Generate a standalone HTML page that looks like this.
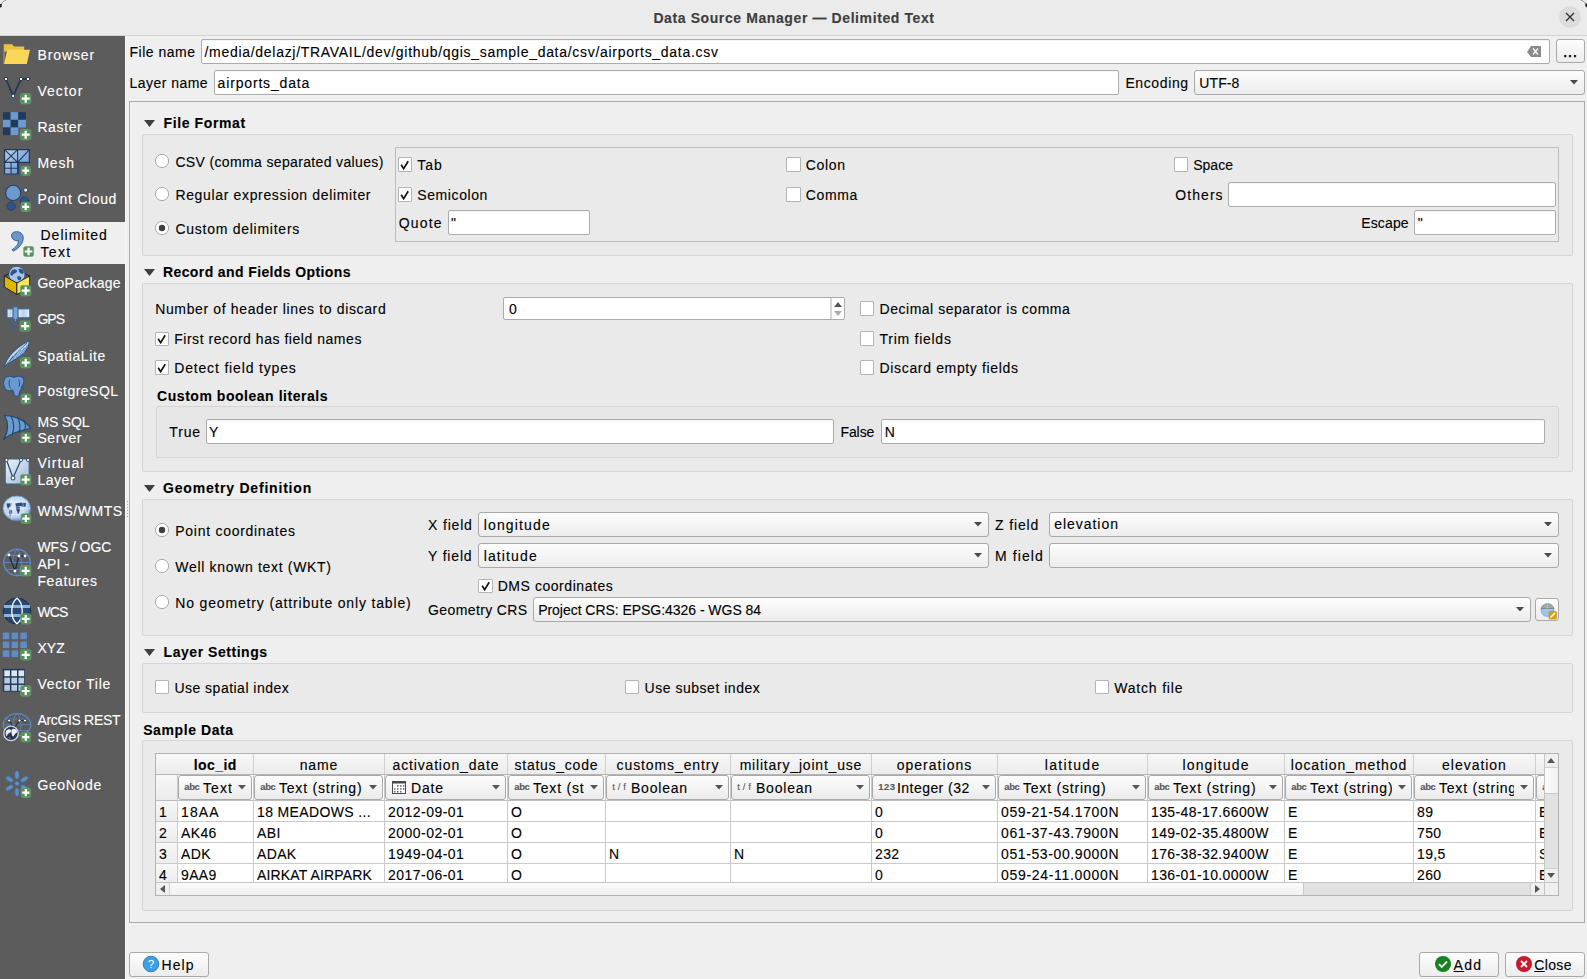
<!DOCTYPE html><html><head><meta charset="utf-8"><style>
html,body{margin:0;padding:0;width:1587px;height:979px;overflow:hidden;background:#efefef;font-family:"Liberation Sans",sans-serif;}
.t{position:absolute;white-space:nowrap;line-height:20px;-webkit-text-stroke:0.12px currentColor;}
</style></head><body>
<div style="position:absolute;left:0px;top:0px;width:1588px;height:36px;box-sizing:border-box;background:#ebebeb"></div>
<div style="position:absolute;left:0px;top:35px;width:1588px;height:1px;box-sizing:border-box;background:#d3d3d3"></div>
<div class="t" style="left:653.4px;top:8.1px;font-size:14px;letter-spacing:0.6001785714285721px;color:#3d3d3d;font-weight:bold;">Data Source Manager — Delimited Text</div>
<svg width="24" height="24" style="position:absolute;left:1559px;top:5px"><circle cx="11" cy="12" r="10.8" fill="#dcdcdc"/><path d="M7 8L15 16M15 8L7 16" stroke="#333" stroke-width="1.4"/></svg>
<svg width="8" height="9" style="position:absolute;left:0;top:0"><path d="M0.3 8Q0.8 1.5 6.5 0" stroke="#9a9a9a" stroke-width="1" fill="none"/><path d="M1.8 8Q2.5 3 7.5 1" stroke="#fafafa" stroke-width="0.8" fill="none"/><rect x="0" y="4" width="1.6" height="3.2" fill="#1e1e1e"/></svg>
<svg width="8" height="9" style="position:absolute;left:1579px;top:0"><path d="M7.7 8Q7.2 1.5 1.5 0" stroke="#9a9a9a" stroke-width="1" fill="none"/><path d="M6.2 8Q5.5 3 0.5 1" stroke="#fafafa" stroke-width="0.8" fill="none"/><rect x="6.4" y="3.5" width="1.6" height="3.2" fill="#1e1e1e"/></svg>
<div style="position:absolute;left:0px;top:36px;width:125px;height:944px;box-sizing:border-box;background:#5c5c5c"></div>
<div style="position:absolute;left:0px;top:222px;width:125px;height:42px;box-sizing:border-box;background:#efefef"></div>
<div style="position:absolute;left:125px;top:36px;width:1px;height:944px;box-sizing:border-box;background:#f7f7f7"></div>
<div style="position:absolute;left:127px;top:501px;width:1px;height:1px;box-sizing:border-box;background:#a8a8a8"></div>
<div style="position:absolute;left:127px;top:504px;width:1px;height:1px;box-sizing:border-box;background:#a8a8a8"></div>
<div style="position:absolute;left:127px;top:507px;width:1px;height:1px;box-sizing:border-box;background:#a8a8a8"></div>
<div style="position:absolute;left:127px;top:510px;width:1px;height:1px;box-sizing:border-box;background:#a8a8a8"></div>
<div style="position:absolute;left:127px;top:513px;width:1px;height:1px;box-sizing:border-box;background:#a8a8a8"></div>
<div style="position:absolute;left:127px;top:516px;width:1px;height:1px;box-sizing:border-box;background:#a8a8a8"></div>
<div class="t" style="left:37.4px;top:45.3px;font-size:14px;letter-spacing:0.9067708333333329px;color:#fff;">Browser</div>
<div class="t" style="left:37.4px;top:81.2px;font-size:14px;letter-spacing:1.059375px;color:#fff;">Vector</div>
<div class="t" style="left:37.4px;top:117.2px;font-size:14px;letter-spacing:0.6131249999999995px;color:#fff;">Raster</div>
<div class="t" style="left:37.4px;top:152.8px;font-size:14px;letter-spacing:0.7885416666666671px;color:#fff;">Mesh</div>
<div class="t" style="left:37.4px;top:188.6px;font-size:14px;letter-spacing:0.6609375px;color:#fff;">Point Cloud</div>
<div class="t" style="left:37.4px;top:273.0px;font-size:14px;letter-spacing:0.24965277777777808px;color:#fff;">GeoPackage</div>
<div class="t" style="left:37.4px;top:308.9px;font-size:14px;letter-spacing:-0.9890624999999993px;color:#fff;">GPS</div>
<div class="t" style="left:37.4px;top:345.5px;font-size:14px;letter-spacing:0.6243055555555562px;color:#fff;">SpatiaLite</div>
<div class="t" style="left:37.4px;top:381.0px;font-size:14px;letter-spacing:0.49270833333333364px;color:#fff;">PostgreSQL</div>
<div class="t" style="left:37.4px;top:411.8px;font-size:14px;letter-spacing:-0.16124999999999973px;color:#fff;">MS SQL</div>
<div class="t" style="left:37.4px;top:427.8px;font-size:14px;letter-spacing:0.5731250000000003px;color:#fff;">Server</div>
<div class="t" style="left:37.4px;top:453.3px;font-size:14px;letter-spacing:1.09375px;color:#fff;">Virtual</div>
<div class="t" style="left:37.4px;top:469.5px;font-size:14px;letter-spacing:0.5421875000000007px;color:#fff;">Layer</div>
<div class="t" style="left:37.4px;top:500.9px;font-size:14px;letter-spacing:0.5607142857142853px;color:#fff;">WMS/WMTS</div>
<div class="t" style="left:37.4px;top:537.4px;font-size:14px;letter-spacing:-0.09648437499999929px;color:#fff;">WFS / OGC</div>
<div class="t" style="left:37.4px;top:554.2px;font-size:14px;letter-spacing:0.19374999999999964px;color:#fff;">API -</div>
<div class="t" style="left:37.4px;top:571.1px;font-size:14px;letter-spacing:0.6214285714285717px;color:#fff;">Features</div>
<div class="t" style="left:37.4px;top:601.6px;font-size:14px;letter-spacing:-0.8359375px;color:#fff;">WCS</div>
<div class="t" style="left:37.4px;top:637.9px;font-size:14px;letter-spacing:0.1328125px;color:#fff;">XYZ</div>
<div class="t" style="left:37.4px;top:673.5px;font-size:14px;letter-spacing:0.7525000000000006px;color:#fff;">Vector Tile</div>
<div class="t" style="left:37.4px;top:710.0px;font-size:14px;letter-spacing:-0.32593750000000055px;color:#fff;">ArcGIS REST</div>
<div class="t" style="left:37.4px;top:726.6px;font-size:14px;letter-spacing:0.5731250000000003px;color:#fff;">Server</div>
<div class="t" style="left:37.4px;top:774.5px;font-size:14px;letter-spacing:0.6437499999999995px;color:#fff;">GeoNode</div>
<div class="t" style="left:40.5px;top:225.2px;font-size:14px;letter-spacing:1.0050781250000007px;color:#000;">Delimited</div>
<div class="t" style="left:40.5px;top:241.8px;font-size:14px;letter-spacing:1.3041666666666671px;color:#000;">Text</div>
<svg width="125" height="979" style="position:absolute;left:0;top:0">
<path d="M4 44.2h8.2l1.8 2.2h10.2v5H4z" fill="#e9c443"/>
<path d="M7.3 49.8H30L26.8 64H4z" fill="#fcd659"/>
<path d="M4 44.2V64" stroke="#d9b13a" stroke-width="0.8"/>
<path d="M6 79L13.2 96L21 79H28" stroke="#213a5c" stroke-width="1.9" fill="none"/>
<circle cx="6" cy="79" r="1.7" fill="#fff" stroke="#213a5c" stroke-width="1"/>
<circle cx="21" cy="79" r="1.7" fill="#fff" stroke="#213a5c" stroke-width="1"/>
<circle cx="28" cy="79" r="1.7" fill="#fff" stroke="#213a5c" stroke-width="1"/>
<circle cx="13.2" cy="96" r="1.7" fill="#fff" stroke="#213a5c" stroke-width="1"/>
<rect x="20.5" y="93.5" width="10.4" height="10.4" rx="1.8" fill="#55915a" stroke="#6fa46f" stroke-width="0.6"/><path d="M25.7 94.7V102.7M21.7 98.7H29.7" stroke="#fff" stroke-width="2.2"/>
<rect x="3.0" y="112.2" width="7.7" height="7.7" fill="#213a5c"/>
<rect x="10.6" y="112.2" width="7.7" height="7.7" fill="#6a9bd3"/>
<rect x="18.2" y="112.2" width="7.7" height="7.7" fill="#213a5c"/>
<rect x="3.0" y="119.8" width="7.7" height="7.7" fill="#6a9bd3"/>
<rect x="10.6" y="119.8" width="7.7" height="7.7" fill="#213a5c"/>
<rect x="18.2" y="119.8" width="7.7" height="7.7" fill="#6a9bd3"/>
<rect x="3.0" y="127.4" width="7.7" height="7.7" fill="#213a5c"/>
<rect x="10.6" y="127.4" width="7.7" height="7.7" fill="#6a9bd3"/>
<rect x="20.5" y="129.5" width="10.4" height="10.4" rx="1.8" fill="#55915a" stroke="#6fa46f" stroke-width="0.6"/><path d="M25.7 130.7V138.7M21.7 134.7H29.7" stroke="#fff" stroke-width="2.2"/>
<defs><linearGradient id="mg" x1="0" y1="0" x2="1" y2="1"><stop offset="0" stop-color="#b5cfee"/><stop offset="1" stop-color="#5e8ec9"/></linearGradient></defs>
<path d="M4.6 149.6H29.4V162.4H18.2V174H4.6z" fill="url(#mg)" stroke="#213a5c" stroke-width="1.2" stroke-linejoin="miter"/>
<path d="M4.6 162.4H18.2M17.6 149.6V174M4.6 149.6L17.6 162.4M17.6 149.6L4.6 162.4M17.6 162.4L29.4 149.6M4.6 168.2H17.6M11.1 162.4V174" stroke="#213a5c" stroke-width="1.1"/>
<rect x="21.0" y="166.0" width="9.4" height="9.4" rx="1.8" fill="#55915a" stroke="#6fa46f" stroke-width="0.6"/><path d="M25.7 167.2V174.2M22.2 170.7H29.2" stroke="#fff" stroke-width="2.2"/>
<circle cx="13.2" cy="192.9" r="7.6" fill="#6a98cf" stroke="#22416a" stroke-width="1.1"/>
<circle cx="25.7" cy="190.1" r="2.1" fill="#dfe9f5" stroke="#22416a" stroke-width="0.9"/>
<circle cx="24.6" cy="201.4" r="4.4" fill="#2e5384" stroke="#22416a" stroke-width="0.8"/>
<circle cx="11.1" cy="206.1" r="4.2" fill="#2e5384" stroke="#22416a" stroke-width="0.8"/>
<rect x="21.0" y="202.10000000000002" width="9.4" height="9.4" rx="1.8" fill="#55915a" stroke="#6fa46f" stroke-width="0.6"/><path d="M25.7 203.3V210.3M22.2 206.8H29.2" stroke="#fff" stroke-width="2.2"/>
<path d="M12.2 233.3C14.5 230.6 22.5 230.8 23.2 237.2C23.8 243 18.6 248.5 13.2 251.2L12.2 249.6C15.8 247.3 18.6 244.4 18.4 240.6C14.4 241.8 9.8 237.6 12.2 233.3z" fill="#6a97c9" stroke="#2f5987" stroke-width="0.9"/>
<rect x="23.6" y="246.5" width="10.0" height="10.0" rx="1.8" fill="#55915a" stroke="#6fa46f" stroke-width="0.6"/><path d="M28.6 247.7V255.3M24.8 251.5H32.4" stroke="#fff" stroke-width="2.2"/>
<circle cx="16.8" cy="274.5" r="8.2" fill="#a4c6ea" stroke="#33577f" stroke-width="0.9"/>
<path d="M10.5 272.5c1.5-3 4.5-4 6-2.5s-0.5 3 -2 3.5-1.5 2.5-3 2.2c-1-0.2-1.3-1.8-1-3.2zM18.5 269c2-0.5 4.5 0.5 5.2 2.5s-1 2.5-2.5 2.2-2.7-2.7-2.7-4.7zM17.5 276.5c1.5-0.5 3.5 0 3.8 1.5s-1.5 2.5-2.8 2-1.5-3-1-3.5z" fill="#2d5386"/>
<path d="M4.3 276L16.9 283V294.5L4.3 287z" fill="#dcb800" stroke="#1a1a1a" stroke-width="0.9" stroke-linejoin="round"/>
<path d="M16.9 283L29.6 276V287.5L16.9 294.5z" fill="#f3e65a" stroke="#1a1a1a" stroke-width="0.9" stroke-linejoin="round"/>
<path d="M4.3 276L9 273.8M29.6 276L25 273.8" stroke="#1a1a1a" stroke-width="0.9"/>
<rect x="20.5" y="285.5" width="10.4" height="10.4" rx="1.8" fill="#55915a" stroke="#6fa46f" stroke-width="0.6"/><path d="M25.7 286.7V294.7M21.7 290.7H29.7" stroke="#fff" stroke-width="2.2"/>
<defs><linearGradient id="gp" x1="0" y1="0" x2="1" y2="0"><stop offset="0" stop-color="#e8f0f8"/><stop offset="0.5" stop-color="#b9d0ea"/><stop offset="1" stop-color="#e8f0f8"/></linearGradient></defs>
<rect x="7" y="308.8" width="6.5" height="9" fill="url(#gp)" stroke="#3b6290" stroke-width="1.1"/>
<rect x="17.5" y="308.8" width="12.3" height="9" fill="url(#gp)" stroke="#3b6290" stroke-width="1.1"/>
<path d="M13 306.8h5v12.5h-1.5v2.5h-2v-2.5H13z" fill="#7aa3d3" stroke="#3b6290" stroke-width="1.1"/>
<path d="M6.5 321.5c0.8 4.5 4 8 10 9M9.5 320.5c0.6 3 2.6 5.2 7 6" stroke="#3b6290" stroke-width="1.3" fill="none"/>
<rect x="20.0" y="320.90000000000003" width="10.4" height="10.4" rx="1.8" fill="#55915a" stroke="#6fa46f" stroke-width="0.6"/><path d="M25.2 322.1V330.1M21.2 326.1H29.2" stroke="#fff" stroke-width="2.2"/>
<path d="M3.6 367.6C6 360 12 349 29.6 340.4C29 347 25 354 16.5 358.5C12 361 7.5 363.5 3.6 367.6z" fill="#c6d9ef" stroke="#34587f" stroke-width="1.1"/>
<path d="M9.5 361.5L13 356M12.5 359.8L17 353M16 358L21 350M19.5 356L24.5 347.5M23 353.5L27.5 345" stroke="#6f9acb" stroke-width="1.4"/>
<path d="M3.6 367.6C10 360 18 351 27 343" stroke="#34587f" stroke-width="0.8" fill="none"/>
<rect x="20.5" y="357.5" width="10.4" height="10.4" rx="1.8" fill="#55915a" stroke="#6fa46f" stroke-width="0.6"/><path d="M25.7 358.7V366.7M21.7 362.7H29.7" stroke="#fff" stroke-width="2.2"/>
<path d="M5 378C7 375.5 12 376 14 377.5C16 376 21 375.5 23.2 378C24.5 381 23.5 385 21 387.8L23.8 388.3L20.8 389.6C19.8 390.5 19.6 392 19.2 394C18.6 396.6 15 397 14.2 395C13.3 393 13.6 391 12.6 390C10 391 7 391 5.5 389C3 386 3 381 5 378z" fill="#6a9acf" stroke="#2a5283" stroke-width="1.1" stroke-linejoin="round"/>
<path d="M9.8 379.5C8.5 382 9 386 10.5 388.5M18.5 379.5C20 381.5 20 384.5 18.8 386.8" stroke="#2a5283" stroke-width="1" fill="none"/>
<rect x="21.0" y="394.1" width="9.700000000000001" height="9.700000000000001" rx="1.8" fill="#55915a" stroke="#6fa46f" stroke-width="0.6"/><path d="M25.85 395.3V402.6M22.2 398.95H29.5" stroke="#fff" stroke-width="2.2"/>
<path d="M4.2 415.5C13 415.5 25 419 30.5 428.5C21 430 11 433 3.3 439.5C8.5 432 9 422 4.2 415.5z" fill="#6a9acf" stroke="#22476f" stroke-width="1.2" stroke-linejoin="round"/>
<path d="M11 416C14 422 14.5 429 12 435.5M17.5 417C20 422 20.5 427.5 19 433M23.5 419.5C25.5 423 25.8 426.5 25 430" stroke="#22476f" stroke-width="1.1" fill="none"/>
<rect x="21.0" y="432.90000000000003" width="9.700000000000001" height="9.700000000000001" rx="1.8" fill="#55915a" stroke="#6fa46f" stroke-width="0.6"/><path d="M25.85 434.1V441.40000000000003M22.2 437.75H29.5" stroke="#fff" stroke-width="2.2"/>
<defs><linearGradient id="vg" x1="0" y1="0" x2="1" y2="1"><stop offset="0" stop-color="#eef3f9"/><stop offset="1" stop-color="#9db8d9"/></linearGradient></defs>
<rect x="5.2" y="459" width="24" height="25" rx="2" fill="url(#vg)" stroke="#3c608c" stroke-width="1.1"/>
<path d="M6.5 460L13 478L21 460" stroke="#22476f" stroke-width="1.2" fill="none"/>
<circle cx="13" cy="478" r="2" fill="#fff" stroke="#22476f" stroke-width="1"/>
<circle cx="21" cy="460" r="1.6" fill="#fff" stroke="#22476f" stroke-width="0.9"/><circle cx="28" cy="460" r="1.6" fill="#fff" stroke="#22476f" stroke-width="0.9"/><circle cx="6.5" cy="460" r="1.6" fill="#fff" stroke="#22476f" stroke-width="0.9"/>
<rect x="20.5" y="474.5" width="10.4" height="10.4" rx="1.8" fill="#55915a" stroke="#6fa46f" stroke-width="0.6"/><path d="M25.7 475.7V483.7M21.7 479.7H29.7" stroke="#fff" stroke-width="2.2"/>
<defs><radialGradient id="wg" cx="0.45" cy="0.4" r="0.6"><stop offset="0" stop-color="#e6eff9"/><stop offset="0.75" stop-color="#bcd3ee"/><stop offset="1" stop-color="#6d98cd"/></radialGradient></defs>
<ellipse cx="16.8" cy="508.3" rx="13.8" ry="12.3" fill="url(#wg)" stroke="#6a96cc" stroke-width="0.8"/>
<path d="M6.5 503.5L11.5 503.2L11 506L9 507.5L8 510L7 506z M9.5 509.5L12 510.5L11.5 514L10 516.5L9.3 513z M15.2 503.5L21 502.5L26 503L25.5 506.5L23.5 507L21 506L19 506.5L16 506.5z M15.5 506.8L20 507L19.8 510.5L18.2 514.5L16.5 510z" fill="#2b4d7c"/>
<path d="M3.5 508.3H30M5.5 502H28M5.5 514.5H28M12.5 496.5C9.5 502 9.5 514 12.5 520.2M21 496.5C24 502 24 514 21 520.2" stroke="#f2f6fb" stroke-width="0.6" fill="none" opacity="0.8"/>
<rect x="21.0" y="513.6999999999999" width="9.8" height="9.8" rx="1.8" fill="#55915a" stroke="#6fa46f" stroke-width="0.6"/><path d="M25.9 514.9V522.3M22.2 518.6H29.6" stroke="#fff" stroke-width="2.2"/>
<circle cx="17" cy="562.5" r="13.2" fill="#4f4f4f" fill-opacity="0.0" stroke="#5a8ac5" stroke-width="1.4"/>
<path d="M4 562.5H30M17 549.5C11 556 11 569 17 575.5M17 549.5C23 556 23 569 17 575.5M6 555.5H28M6 569.5H28" stroke="#5a8ac5" stroke-width="0.9" fill="none"/>
<path d="M9 555L15 571L19 556L25 556" stroke="#1d2c40" stroke-width="1.3" fill="none"/>
<circle cx="9" cy="555" r="1.4" fill="#fff"/><circle cx="19" cy="556" r="1.4" fill="#fff"/><circle cx="25" cy="556" r="1.4" fill="#fff"/><circle cx="15" cy="571" r="1.4" fill="#fff"/>
<rect x="20.5" y="565.5999999999999" width="10.4" height="10.4" rx="1.8" fill="#55915a" stroke="#6fa46f" stroke-width="0.6"/><path d="M25.7 566.8V574.8M21.7 570.8H29.7" stroke="#fff" stroke-width="2.2"/>
<ellipse cx="17" cy="611" rx="13.7" ry="13" fill="#2b4a73" stroke="#1a2c44" stroke-width="1"/>
<path d="M4 606.5H30M4 615.5H30" stroke="#8fb2dc" stroke-width="3.2"/>
<path d="M17 598C10 604 10 618 17 624M17 598C24 604 24 618 17 624" stroke="#fff" stroke-width="1.3" fill="none"/>
<rect x="20.5" y="613.6999999999999" width="10.4" height="10.4" rx="1.8" fill="#55915a" stroke="#6fa46f" stroke-width="0.6"/><path d="M25.7 614.9V622.9M21.7 618.9H29.7" stroke="#fff" stroke-width="2.2"/>
<rect x="2.8" y="632.6" width="6.5" height="6.6" fill="#5d8cc7"/>
<rect x="11.6" y="632.6" width="6.5" height="6.6" fill="#5d8cc7"/>
<rect x="20.4" y="632.6" width="6.5" height="6.6" fill="#5d8cc7"/>
<rect x="2.8" y="641.5" width="6.5" height="6.6" fill="#5d8cc7"/>
<rect x="11.6" y="641.5" width="6.5" height="6.6" fill="#5d8cc7"/>
<rect x="20.4" y="641.5" width="6.5" height="6.6" fill="#5d8cc7"/>
<rect x="2.8" y="650.4" width="6.5" height="6.6" fill="#5d8cc7"/>
<rect x="11.6" y="650.4" width="6.5" height="6.6" fill="#5d8cc7"/>
<rect x="20.5" y="649.6999999999999" width="10.4" height="10.4" rx="1.8" fill="#55915a" stroke="#6fa46f" stroke-width="0.6"/><path d="M25.7 650.9V658.9M21.7 654.9H29.7" stroke="#fff" stroke-width="2.2"/>
<rect x="2.8" y="668.9" width="22" height="22.8" fill="#213a5c"/>
<rect x="4.3" y="670.4" width="5.6" height="5.8" fill="#dde6f1"/>
<rect x="11.4" y="670.4" width="5.6" height="5.8" fill="#dde6f1"/>
<rect x="18.5" y="670.4" width="5.6" height="5.8" fill="#dde6f1"/>
<rect x="4.3" y="677.7" width="5.6" height="5.8" fill="#b7cbe3"/>
<rect x="11.4" y="677.7" width="5.6" height="5.8" fill="#b7cbe3"/>
<rect x="18.5" y="677.7" width="5.6" height="5.8" fill="#b7cbe3"/>
<rect x="4.3" y="685.0" width="5.6" height="5.8" fill="#b7cbe3"/>
<rect x="11.4" y="685.0" width="5.6" height="5.8" fill="#b7cbe3"/>
<rect x="18.5" y="685.0" width="5.6" height="5.8" fill="#b7cbe3"/>
<rect x="20.5" y="685.8" width="10.4" height="10.4" rx="1.8" fill="#55915a" stroke="#6fa46f" stroke-width="0.6"/><path d="M25.7 687.0V695.0M21.7 691.0H29.7" stroke="#fff" stroke-width="2.2"/>
<ellipse cx="17" cy="724.7" rx="13.8" ry="11" fill="none" stroke="#5a8ac5" stroke-width="1.3"/>
<path d="M3.5 724.7H30.5M6 719H28M6 730.5H28M17 713.7C11.5 719 11.5 730 17 735.7M17 713.7C22.5 719 22.5 730 17 735.7" stroke="#5a8ac5" stroke-width="0.8" fill="none"/>
<path d="M9.2 720.5L14 728L19.5 720.5H25" stroke="#1d2c40" stroke-width="1.2" fill="none"/>
<circle cx="9.2" cy="720.5" r="1.5" fill="#fff" stroke="#1d2c40" stroke-width="0.8"/><circle cx="19.5" cy="720.5" r="1.5" fill="#fff" stroke="#1d2c40" stroke-width="0.8"/><circle cx="25" cy="720.5" r="1.5" fill="#fff" stroke="#1d2c40" stroke-width="0.8"/>
<circle cx="11" cy="733.4" r="7.2" fill="#23395a" stroke="#d8d8d8" stroke-width="1.3"/>
<path d="M6 731c1.5-2 4-2.5 5-1s-1 3-2.5 3.5-1 3-2 2.5c-1-0.8-1-3.5-0.5-5zM12.5 729c2-0.5 4 0.5 4.5 2s-1 2-2 3-1 3-2 2.5-1.5-3-1.5-4.5 0-2.5 1-3zM8.5 737.5c1 0 2 0.5 1.8 1.5" fill="#f0f0f0"/>
<rect x="21.0" y="732.3" width="9.6" height="9.6" rx="1.8" fill="#55915a" stroke="#6fa46f" stroke-width="0.6"/><path d="M25.799999999999997 733.5V740.7M22.2 737.1H29.4" stroke="#fff" stroke-width="2.2"/>
<g transform="translate(17 783.5)" fill="#5f8fca" stroke="#3f6a9e" stroke-width="0.6">
<ellipse cx="0" cy="-8.6" rx="2.1" ry="4.2" transform="rotate(0)"/>
<ellipse cx="0" cy="-8.6" rx="2.1" ry="4.2" transform="rotate(60)"/>
<ellipse cx="0" cy="-8.6" rx="2.1" ry="4.2" transform="rotate(120)"/>
<ellipse cx="0" cy="-8.6" rx="2.1" ry="4.2" transform="rotate(180)"/>
<ellipse cx="0" cy="-8.6" rx="2.1" ry="4.2" transform="rotate(240)"/>
<ellipse cx="0" cy="-8.6" rx="2.1" ry="4.2" transform="rotate(300)"/>
<circle cx="0" cy="0" r="2.2"/></g>
<rect x="21.0" y="787.9" width="9.6" height="9.6" rx="1.8" fill="#55915a" stroke="#6fa46f" stroke-width="0.6"/><path d="M25.799999999999997 789.1V796.3000000000001M22.2 792.7H29.4" stroke="#fff" stroke-width="2.2"/>
</svg>
<div class="t" style="left:129.5px;top:42.0px;font-size:14px;letter-spacing:0.50390625px;color:#000;">File name</div>
<div style="position:absolute;left:201px;top:39px;width:1349px;height:25px;box-sizing:border-box;background:#fff;border:1px solid #ababab;border-radius:2px;box-shadow:inset 0 1px 0 rgba(0,0,0,0.04)"></div>
<div class="t" style="left:204.5px;top:41.7px;font-size:14px;letter-spacing:0.7048214285714283px;color:#000;">/media/delazj/TRAVAIL/dev/github/qgis_sample_data/csv/airports_data.csv</div>
<svg width="14" height="12" style="position:absolute;left:1527px;top:46px"><path d="M0 6L4 0H14V11H4z" fill="#8a8a8a"/><path d="M6 2.5L11 8.5M11 2.5L6 8.5" stroke="#fff" stroke-width="1.2"/></svg>
<div style="position:absolute;left:1556px;top:39px;width:29px;height:24px;box-sizing:border-box;background:linear-gradient(#fdfdfd,#ececec);border:1px solid #a9a9a9;border-radius:3px"></div>
<div class="t" style="left:1563.2px;top:42.2px;font-size:14px;letter-spacing:1.0px;color:#000;-webkit-text-stroke:0.6px #000;">...</div>
<div class="t" style="left:129.5px;top:73.0px;font-size:14px;letter-spacing:0.46249999999999936px;color:#000;">Layer name</div>
<div style="position:absolute;left:214px;top:70px;width:905px;height:25px;box-sizing:border-box;background:#fff;border:1px solid #ababab;border-radius:2px;box-shadow:inset 0 1px 0 rgba(0,0,0,0.04)"></div>
<div class="t" style="left:217.6px;top:72.5px;font-size:14px;letter-spacing:0.8317708333333336px;color:#000;">airports_data</div>
<div class="t" style="left:1125.4px;top:73.0px;font-size:14px;letter-spacing:0.6156250000000004px;color:#000;">Encoding</div>
<div style="position:absolute;left:1194px;top:70px;width:391px;height:25px;box-sizing:border-box;background:linear-gradient(#fdfdfd,#ececec);border:1px solid #a9a9a9;border-radius:3px"></div>
<div class="t" style="left:1199.3px;top:72.7px;font-size:14px;letter-spacing:0.10703125000000036px;color:#000;">UTF-8</div>
<svg width="8" height="4.6" style="position:absolute;left:1569.5px;top:80.0px"><path d="M0 0H8L4.0 4.6z" fill="#4a4a4a"/></svg>
<div style="position:absolute;left:129px;top:101px;width:1456px;height:822px;box-sizing:border-box;border:1px solid #ababab;background:#efefef"></div>
<svg width="12" height="8" style="position:absolute;left:143.6px;top:120.0px"><path d="M0 0H11L5.5 7z" fill="#404040"/></svg>
<div class="t" style="left:163.5px;top:113.1px;font-size:14px;letter-spacing:0.6231250000000003px;color:#000;font-weight:bold;">File Format</div>
<div style="position:absolute;left:142px;top:134px;width:1431px;height:122px;box-sizing:border-box;border:1px solid #d5d5d5;border-radius:2px;background:rgba(0,0,0,0.018)"></div>
<svg width="16" height="16" style="position:absolute;left:154.1px;top:152.9px"><circle cx="8" cy="8" r="6.6" fill="#fff" stroke="#a9a9a9" stroke-width="1"/></svg>
<div class="t" style="left:175.4px;top:151.8px;font-size:14px;letter-spacing:0.35474537037037035px;color:#000;">CSV (comma separated values)</div>
<svg width="16" height="16" style="position:absolute;left:154.1px;top:185.9px"><circle cx="8" cy="8" r="6.6" fill="#fff" stroke="#a9a9a9" stroke-width="1"/></svg>
<div class="t" style="left:175.4px;top:184.8px;font-size:14px;letter-spacing:0.6547453703703702px;color:#000;">Regular expression delimiter</div>
<svg width="16" height="16" style="position:absolute;left:154.1px;top:219.9px"><circle cx="8" cy="8" r="6.6" fill="#fff" stroke="#a9a9a9" stroke-width="1"/><circle cx="8" cy="8" r="3.2" fill="#404040"/></svg>
<div class="t" style="left:175.4px;top:218.8px;font-size:14px;letter-spacing:0.7417968750000004px;color:#000;">Custom delimiters</div>
<div style="position:absolute;left:395px;top:147px;width:1164px;height:95px;box-sizing:border-box;border:1px solid #bdbdbd"></div>
<div style="position:absolute;left:398px;top:157px;width:14px;height:15px;box-sizing:border-box;background:#fff;border:1px solid #b4b4b4;border-radius:1px"></div>
<svg width="14" height="14" style="position:absolute;left:398.3px;top:157.8px"><path d="M3.2 6.8 L5.6 10.6 L10.2 3.2" stroke="#111" stroke-width="1.7" fill="none" stroke-linejoin="miter"/></svg>
<div class="t" style="left:417.3px;top:155.0px;font-size:14px;letter-spacing:0.9609375px;color:#000;">Tab</div>
<div style="position:absolute;left:398px;top:187px;width:14px;height:15px;box-sizing:border-box;background:#fff;border:1px solid #b4b4b4;border-radius:1px"></div>
<svg width="14" height="14" style="position:absolute;left:398.3px;top:187.6px"><path d="M3.2 6.8 L5.6 10.6 L10.2 3.2" stroke="#111" stroke-width="1.7" fill="none" stroke-linejoin="miter"/></svg>
<div class="t" style="left:417.3px;top:185.0px;font-size:14px;letter-spacing:0.5906249999999993px;color:#000;">Semicolon</div>
<div style="position:absolute;left:786px;top:157px;width:15px;height:15px;box-sizing:border-box;background:#fff;border:1px solid #b4b4b4;border-radius:1px"></div>
<div class="t" style="left:805.8px;top:155.0px;font-size:14px;letter-spacing:0.6765624999999993px;color:#000;">Colon</div>
<div style="position:absolute;left:786px;top:187px;width:15px;height:15px;box-sizing:border-box;background:#fff;border:1px solid #b4b4b4;border-radius:1px"></div>
<div class="t" style="left:805.8px;top:185.0px;font-size:14px;letter-spacing:0.62109375px;color:#000;">Comma</div>
<div style="position:absolute;left:1174px;top:157px;width:14px;height:15px;box-sizing:border-box;background:#fff;border:1px solid #b4b4b4;border-radius:1px"></div>
<div class="t" style="left:1193.2px;top:155.0px;font-size:14px;letter-spacing:0.02421874999999929px;color:#000;">Space</div>
<div class="t" style="left:398.7px;top:213.2px;font-size:14px;letter-spacing:1.1648437499999993px;color:#000;">Quote</div>
<div style="position:absolute;left:448px;top:210px;width:142px;height:25px;box-sizing:border-box;background:#fff;border:1px solid #ababab;border-radius:2px;box-shadow:inset 0 1px 0 rgba(0,0,0,0.04)"></div>
<div class="t" style="left:451.0px;top:212.6px;font-size:14px;letter-spacing:0.45px;color:#000;">"</div>
<div class="t" style="left:1175.3px;top:184.7px;font-size:14px;letter-spacing:1.0568749999999993px;color:#000;">Others</div>
<div style="position:absolute;left:1228px;top:182px;width:328px;height:25px;box-sizing:border-box;background:#fff;border:1px solid #ababab;border-radius:2px;box-shadow:inset 0 1px 0 rgba(0,0,0,0.04)"></div>
<div class="t" style="left:1361.3px;top:213.2px;font-size:14px;letter-spacing:0.11937499999999943px;color:#000;">Escape</div>
<div style="position:absolute;left:1414px;top:210px;width:142px;height:25px;box-sizing:border-box;background:#fff;border:1px solid #ababab;border-radius:2px;box-shadow:inset 0 1px 0 rgba(0,0,0,0.04)"></div>
<div class="t" style="left:1417.8px;top:212.7px;font-size:14px;letter-spacing:0.45px;color:#000;">"</div>
<svg width="12" height="8" style="position:absolute;left:143.6px;top:269.0px"><path d="M0 0H11L5.5 7z" fill="#404040"/></svg>
<div class="t" style="left:163.0px;top:261.6px;font-size:14px;letter-spacing:0.3899739583333333px;color:#000;font-weight:bold;">Record and Fields Options</div>
<div style="position:absolute;left:142px;top:283px;width:1431px;height:189px;box-sizing:border-box;border:1px solid #d5d5d5;border-radius:2px;background:rgba(0,0,0,0.018)"></div>
<div class="t" style="left:155.2px;top:298.6px;font-size:14px;letter-spacing:0.63720703125px;color:#000;">Number of header lines to discard</div>
<div style="position:absolute;left:503px;top:297px;width:342px;height:23px;box-sizing:border-box;background:#fff;border:1px solid #ababab;border-radius:2px"></div>
<div style="position:absolute;left:830px;top:298px;width:2px;height:21px;box-sizing:border-box;background:#d6d6d6"></div>
<svg width="10" height="16" style="position:absolute;left:832.5px;top:300.5px"><path d="M1 6H9L5 1z" fill="#555"/><path d="M1 10H9L5 15z" fill="#aaa"/></svg>
<div class="t" style="left:508.9px;top:298.6px;font-size:14px;letter-spacing:0.45px;color:#000;">0</div>
<div style="position:absolute;left:155px;top:332px;width:14px;height:14px;box-sizing:border-box;background:#fff;border:1px solid #b4b4b4;border-radius:1px"></div>
<svg width="14" height="14" style="position:absolute;left:155.2px;top:332.1px"><path d="M3.2 6.8 L5.6 10.6 L10.2 3.2" stroke="#111" stroke-width="1.7" fill="none" stroke-linejoin="miter"/></svg>
<div class="t" style="left:174.2px;top:328.7px;font-size:14px;letter-spacing:0.5357638888888885px;color:#000;">First record has field names</div>
<div style="position:absolute;left:155px;top:360px;width:14px;height:15px;box-sizing:border-box;background:#fff;border:1px solid #b4b4b4;border-radius:1px"></div>
<svg width="14" height="14" style="position:absolute;left:155.2px;top:360.6px"><path d="M3.2 6.8 L5.6 10.6 L10.2 3.2" stroke="#111" stroke-width="1.7" fill="none" stroke-linejoin="miter"/></svg>
<div class="t" style="left:174.2px;top:357.5px;font-size:14px;letter-spacing:0.8358455882352938px;color:#000;">Detect field types</div>
<div style="position:absolute;left:860px;top:301px;width:14px;height:15px;box-sizing:border-box;background:#fff;border:1px solid #b4b4b4;border-radius:1px"></div>
<div class="t" style="left:879.6px;top:298.6px;font-size:14px;letter-spacing:0.5123749999999996px;color:#000;">Decimal separator is comma</div>
<div style="position:absolute;left:860px;top:331px;width:14px;height:15px;box-sizing:border-box;background:#fff;border:1px solid #b4b4b4;border-radius:1px"></div>
<div class="t" style="left:879.6px;top:328.7px;font-size:14px;letter-spacing:0.7253124999999997px;color:#000;">Trim fields</div>
<div style="position:absolute;left:860px;top:360px;width:14px;height:15px;box-sizing:border-box;background:#fff;border:1px solid #b4b4b4;border-radius:1px"></div>
<div class="t" style="left:879.6px;top:357.5px;font-size:14px;letter-spacing:0.6501644736842108px;color:#000;">Discard empty fields</div>
<div class="t" style="left:157.1px;top:386.0px;font-size:14px;letter-spacing:0.5316761363636366px;color:#000;font-weight:bold;">Custom boolean literals</div>
<div style="position:absolute;left:156px;top:406px;width:1403px;height:52px;box-sizing:border-box;border:1px solid #d5d5d5;border-radius:2px;background:rgba(0,0,0,0.012)"></div>
<div class="t" style="left:169.3px;top:421.7px;font-size:14px;letter-spacing:0.8395833333333336px;color:#000;">True</div>
<div style="position:absolute;left:206px;top:419px;width:628px;height:25px;box-sizing:border-box;background:#fff;border:1px solid #ababab;border-radius:2px;box-shadow:inset 0 1px 0 rgba(0,0,0,0.04)"></div>
<div class="t" style="left:209.1px;top:421.6px;font-size:14px;letter-spacing:0.45px;color:#000;">Y</div>
<div class="t" style="left:840.4px;top:421.7px;font-size:14px;letter-spacing:-0.05859375px;color:#000;">False</div>
<div style="position:absolute;left:881px;top:419px;width:664px;height:25px;box-sizing:border-box;background:#fff;border:1px solid #ababab;border-radius:2px;box-shadow:inset 0 1px 0 rgba(0,0,0,0.04)"></div>
<div class="t" style="left:884.8px;top:421.7px;font-size:14px;letter-spacing:0.45px;color:#000;">N</div>
<svg width="12" height="8" style="position:absolute;left:143.6px;top:485.0px"><path d="M0 0H11L5.5 7z" fill="#404040"/></svg>
<div class="t" style="left:163.0px;top:478.2px;font-size:14px;letter-spacing:0.8001736111111105px;color:#000;font-weight:bold;">Geometry Definition</div>
<div style="position:absolute;left:142px;top:499px;width:1431px;height:137px;box-sizing:border-box;border:1px solid #d5d5d5;border-radius:2px;background:rgba(0,0,0,0.018)"></div>
<svg width="16" height="16" style="position:absolute;left:153.9px;top:522.2px"><circle cx="8" cy="8" r="6.6" fill="#fff" stroke="#a9a9a9" stroke-width="1"/><circle cx="8" cy="8" r="3.2" fill="#404040"/></svg>
<div class="t" style="left:175.3px;top:520.9px;font-size:14px;letter-spacing:0.7195312500000002px;color:#000;">Point coordinates</div>
<svg width="16" height="16" style="position:absolute;left:153.9px;top:558.2px"><circle cx="8" cy="8" r="6.6" fill="#fff" stroke="#a9a9a9" stroke-width="1"/></svg>
<div class="t" style="left:175.3px;top:556.9px;font-size:14px;letter-spacing:0.6795312499999995px;color:#000;">Well known text (WKT)</div>
<svg width="16" height="16" style="position:absolute;left:153.9px;top:594.2px"><circle cx="8" cy="8" r="6.6" fill="#fff" stroke="#a9a9a9" stroke-width="1"/></svg>
<div class="t" style="left:175.3px;top:592.9px;font-size:14px;letter-spacing:0.8374053030303032px;color:#000;">No geometry (attribute only table)</div>
<div class="t" style="left:428.1px;top:514.5px;font-size:14px;letter-spacing:0.8130208333333329px;color:#000;">X field</div>
<div style="position:absolute;left:478px;top:512px;width:511px;height:25px;box-sizing:border-box;background:linear-gradient(#fdfdfd,#ececec);border:1px solid #a9a9a9;border-radius:3px"></div>
<div class="t" style="left:483.7px;top:514.6px;font-size:14px;letter-spacing:1.146484375px;color:#000;">longitude</div>
<svg width="8" height="4.6" style="position:absolute;left:973.5px;top:522.0px"><path d="M0 0H8L4.0 4.6z" fill="#4a4a4a"/></svg>
<div class="t" style="left:428.1px;top:545.7px;font-size:14px;letter-spacing:0.8046875px;color:#000;">Y field</div>
<div style="position:absolute;left:478px;top:543px;width:511px;height:25px;box-sizing:border-box;background:linear-gradient(#fdfdfd,#ececec);border:1px solid #a9a9a9;border-radius:3px"></div>
<div class="t" style="left:483.7px;top:545.7px;font-size:14px;letter-spacing:1.1205357142857142px;color:#000;">latitude</div>
<svg width="8" height="4.6" style="position:absolute;left:973.5px;top:553.0px"><path d="M0 0H8L4.0 4.6z" fill="#4a4a4a"/></svg>
<div class="t" style="left:995.1px;top:514.5px;font-size:14px;letter-spacing:0.8458333333333338px;color:#000;">Z field</div>
<div style="position:absolute;left:1049px;top:512px;width:510px;height:25px;box-sizing:border-box;background:linear-gradient(#fdfdfd,#ececec);border:1px solid #a9a9a9;border-radius:3px"></div>
<div class="t" style="left:1054.2px;top:514.4px;font-size:14px;letter-spacing:0.9691406249999996px;color:#000;">elevation</div>
<svg width="8" height="4.6" style="position:absolute;left:1543.5px;top:521.8px"><path d="M0 0H8L4.0 4.6z" fill="#4a4a4a"/></svg>
<div class="t" style="left:995.1px;top:545.7px;font-size:14px;letter-spacing:1.0776041666666671px;color:#000;">M field</div>
<div style="position:absolute;left:1049px;top:543px;width:510px;height:25px;box-sizing:border-box;background:linear-gradient(#fdfdfd,#ececec);border:1px solid #a9a9a9;border-radius:3px"></div>
<svg width="8" height="4.6" style="position:absolute;left:1543.5px;top:553.0px"><path d="M0 0H8L4.0 4.6z" fill="#4a4a4a"/></svg>
<div style="position:absolute;left:478px;top:579px;width:15px;height:14px;box-sizing:border-box;background:#fff;border:1px solid #b4b4b4;border-radius:1px"></div>
<svg width="14" height="14" style="position:absolute;left:478.8px;top:579.0px"><path d="M3.2 6.8 L5.6 10.6 L10.2 3.2" stroke="#111" stroke-width="1.7" fill="none" stroke-linejoin="miter"/></svg>
<div class="t" style="left:497.7px;top:575.7px;font-size:14px;letter-spacing:0.5506696428571425px;color:#000;">DMS coordinates</div>
<div class="t" style="left:428.1px;top:600.2px;font-size:14px;letter-spacing:0.37982954545454495px;color:#000;">Geometry CRS</div>
<div style="position:absolute;left:533px;top:597px;width:998px;height:25px;box-sizing:border-box;background:linear-gradient(#fdfdfd,#ececec);border:1px solid #a9a9a9;border-radius:3px"></div>
<div class="t" style="left:538.2px;top:599.5px;font-size:14px;letter-spacing:-0.039791666666666475px;color:#000;">Project CRS: EPSG:4326 - WGS 84</div>
<svg width="8" height="4.6" style="position:absolute;left:1515.5px;top:606.8px"><path d="M0 0H8L4.0 4.6z" fill="#4a4a4a"/></svg>
<div style="position:absolute;left:1535px;top:598px;width:24px;height:23px;box-sizing:border-box;background:linear-gradient(#fdfdfd,#ececec);border:1px solid #a9a9a9;border-radius:3px"></div>
<svg width="20" height="20" style="position:absolute;left:1537.5px;top:599.8px"><circle cx="9.5" cy="10" r="6.5" fill="#9ec5ec" stroke="#6a8fb8" stroke-width="0.6"/><path d="M3 8.5C5 3 14 3 16 8.5z" fill="#9a9a9a" stroke="#707070" stroke-width="0.6"/><path d="M4 7H15M6 5H13M9.5 3.5V8.5" stroke="#d0d0d0" stroke-width="0.5"/><rect x="11" y="11.5" width="7.5" height="7.5" rx="1" fill="#d3a800" stroke="#a88300" stroke-width="0.5"/><path d="M12.5 17.5L17 13" stroke="#fff" stroke-width="1.5"/></svg>
<svg width="12" height="8" style="position:absolute;left:143.6px;top:649.0px"><path d="M0 0H11L5.5 7z" fill="#404040"/></svg>
<div class="t" style="left:163.6px;top:642.2px;font-size:14px;letter-spacing:0.5396634615384616px;color:#000;font-weight:bold;">Layer Settings</div>
<div style="position:absolute;left:142px;top:663px;width:1431px;height:50px;box-sizing:border-box;border:1px solid #d5d5d5;border-radius:2px;background:rgba(0,0,0,0.018)"></div>
<div style="position:absolute;left:155px;top:680px;width:14px;height:14px;box-sizing:border-box;background:#fff;border:1px solid #b4b4b4;border-radius:1px"></div>
<div class="t" style="left:174.4px;top:677.5px;font-size:14px;letter-spacing:0.48593750000000036px;color:#000;">Use spatial index</div>
<div style="position:absolute;left:625px;top:680px;width:14px;height:14px;box-sizing:border-box;background:#fff;border:1px solid #b4b4b4;border-radius:1px"></div>
<div class="t" style="left:644.6px;top:677.5px;font-size:14px;letter-spacing:0.5195833333333335px;color:#000;">Use subset index</div>
<div style="position:absolute;left:1095px;top:680px;width:14px;height:14px;box-sizing:border-box;background:#fff;border:1px solid #b4b4b4;border-radius:1px"></div>
<div class="t" style="left:1114.2px;top:677.5px;font-size:14px;letter-spacing:0.8163194444444442px;color:#000;">Watch file</div>
<div class="t" style="left:143.2px;top:720.0px;font-size:14px;letter-spacing:0.5853125000000006px;color:#000;font-weight:bold;">Sample Data</div>
<div style="position:absolute;left:142px;top:740px;width:1431px;height:171px;box-sizing:border-box;border:1px solid #d5d5d5;border-radius:2px;background:rgba(0,0,0,0.018)"></div>
<div style="position:absolute;left:155px;top:753px;width:1404px;height:143px;box-sizing:border-box;border:1px solid #b3b3b3;background:#fff"></div>
<div style="position:absolute;left:156px;top:754px;width:1388px;height:128px;overflow:hidden">
<div style="position:absolute;left:0px;top:0px;width:1700px;height:20px;box-sizing:border-box;background:linear-gradient(#f7f7f7,#ececec)"></div>
<div style="position:absolute;left:0px;top:20px;width:1700px;height:1px;box-sizing:border-box;background:#b5b5b5"></div>
<div style="position:absolute;left:0px;top:21px;width:21px;height:25px;box-sizing:border-box;background:linear-gradient(#f7f7f7,#ececec)"></div>
<div style="position:absolute;left:0px;top:46px;width:1700px;height:1px;box-sizing:border-box;background:#bdbdbd"></div>
<div style="position:absolute;left:0px;top:47px;width:21px;height:20px;box-sizing:border-box;background:linear-gradient(#f7f7f7,#ececec)"></div>
<div style="position:absolute;left:0px;top:67px;width:1700px;height:1px;box-sizing:border-box;background:#cacaca"></div>
<div style="position:absolute;left:0px;top:68px;width:21px;height:20px;box-sizing:border-box;background:linear-gradient(#f7f7f7,#ececec)"></div>
<div style="position:absolute;left:0px;top:88px;width:1700px;height:1px;box-sizing:border-box;background:#cacaca"></div>
<div style="position:absolute;left:0px;top:89px;width:21px;height:20px;box-sizing:border-box;background:linear-gradient(#f7f7f7,#ececec)"></div>
<div style="position:absolute;left:0px;top:109px;width:1700px;height:1px;box-sizing:border-box;background:#cacaca"></div>
<div style="position:absolute;left:0px;top:110px;width:21px;height:20px;box-sizing:border-box;background:linear-gradient(#f7f7f7,#ececec)"></div>
<div style="position:absolute;left:0px;top:130px;width:1700px;height:1px;box-sizing:border-box;background:#cacaca"></div>
<div style="position:absolute;left:21px;top:21px;width:1px;height:120px;box-sizing:border-box;background:#cacaca"></div>
<div style="position:absolute;left:97px;top:0px;width:1px;height:20px;box-sizing:border-box;background:#cfcfcf"></div>
<div style="position:absolute;left:97px;top:21px;width:1px;height:120px;box-sizing:border-box;background:#cacaca"></div>
<div style="position:absolute;left:228px;top:0px;width:1px;height:20px;box-sizing:border-box;background:#cfcfcf"></div>
<div style="position:absolute;left:228px;top:21px;width:1px;height:120px;box-sizing:border-box;background:#cacaca"></div>
<div style="position:absolute;left:351px;top:0px;width:1px;height:20px;box-sizing:border-box;background:#cfcfcf"></div>
<div style="position:absolute;left:351px;top:21px;width:1px;height:120px;box-sizing:border-box;background:#cacaca"></div>
<div style="position:absolute;left:449px;top:0px;width:1px;height:20px;box-sizing:border-box;background:#cfcfcf"></div>
<div style="position:absolute;left:449px;top:21px;width:1px;height:120px;box-sizing:border-box;background:#cacaca"></div>
<div style="position:absolute;left:574px;top:0px;width:1px;height:20px;box-sizing:border-box;background:#cfcfcf"></div>
<div style="position:absolute;left:574px;top:21px;width:1px;height:120px;box-sizing:border-box;background:#cacaca"></div>
<div style="position:absolute;left:715px;top:0px;width:1px;height:20px;box-sizing:border-box;background:#cfcfcf"></div>
<div style="position:absolute;left:715px;top:21px;width:1px;height:120px;box-sizing:border-box;background:#cacaca"></div>
<div style="position:absolute;left:841px;top:0px;width:1px;height:20px;box-sizing:border-box;background:#cfcfcf"></div>
<div style="position:absolute;left:841px;top:21px;width:1px;height:120px;box-sizing:border-box;background:#cacaca"></div>
<div style="position:absolute;left:991px;top:0px;width:1px;height:20px;box-sizing:border-box;background:#cfcfcf"></div>
<div style="position:absolute;left:991px;top:21px;width:1px;height:120px;box-sizing:border-box;background:#cacaca"></div>
<div style="position:absolute;left:1128px;top:0px;width:1px;height:20px;box-sizing:border-box;background:#cfcfcf"></div>
<div style="position:absolute;left:1128px;top:21px;width:1px;height:120px;box-sizing:border-box;background:#cacaca"></div>
<div style="position:absolute;left:1257px;top:0px;width:1px;height:20px;box-sizing:border-box;background:#cfcfcf"></div>
<div style="position:absolute;left:1257px;top:21px;width:1px;height:120px;box-sizing:border-box;background:#cacaca"></div>
<div style="position:absolute;left:1379px;top:0px;width:1px;height:20px;box-sizing:border-box;background:#cfcfcf"></div>
<div style="position:absolute;left:1379px;top:21px;width:1px;height:120px;box-sizing:border-box;background:#cacaca"></div>
<div class="t" style="left:21px;top:0.5px;width:76px;text-align:center;font-size:14px;letter-spacing:0.446px;text-indent:0.446px;font-weight:bold;">loc_id</div>
<div class="t" style="left:97px;top:0.5px;width:131px;text-align:center;font-size:14px;letter-spacing:0.856px;text-indent:0.856px;">name</div>
<div class="t" style="left:228px;top:0.5px;width:123px;text-align:center;font-size:14px;letter-spacing:0.837px;text-indent:0.837px;">activation_date</div>
<div class="t" style="left:351px;top:0.5px;width:98px;text-align:center;font-size:14px;letter-spacing:0.740px;text-indent:0.740px;">status_code</div>
<div class="t" style="left:449px;top:0.5px;width:125px;text-align:center;font-size:14px;letter-spacing:0.896px;text-indent:0.896px;">customs_entry</div>
<div class="t" style="left:574px;top:0.5px;width:141px;text-align:center;font-size:14px;letter-spacing:0.796px;text-indent:0.796px;">military_joint_use</div>
<div class="t" style="left:715px;top:0.5px;width:126px;text-align:center;font-size:14px;letter-spacing:1.034px;text-indent:1.034px;">operations</div>
<div class="t" style="left:841px;top:0.5px;width:150px;text-align:center;font-size:14px;letter-spacing:1.321px;text-indent:1.321px;">latitude</div>
<div class="t" style="left:991px;top:0.5px;width:137px;text-align:center;font-size:14px;letter-spacing:1.159px;text-indent:1.159px;">longitude</div>
<div class="t" style="left:1128px;top:0.5px;width:129px;text-align:center;font-size:14px;letter-spacing:0.925px;text-indent:0.925px;">location_method</div>
<div class="t" style="left:1257px;top:0.5px;width:122px;text-align:center;font-size:14px;letter-spacing:0.969px;text-indent:0.969px;">elevation</div>
<div class="t" style="left:1379px;top:0.5px;width:125px;text-align:center;font-size:14px;letter-spacing:0.969px;text-indent:0.969px;">elevation</div>
<div style="position:absolute;left:22px;top:21px;width:74px;height:25px;box-sizing:border-box;background:linear-gradient(#fdfdfd,#ebebeb);border:1px solid #a9a9a9;border-radius:3px"></div>
<div class="t" style="left:28.3px;top:22.7px;font-size:9.5px;letter-spacing:-0.3875000000000002px;color:#5a5a5a;font-weight:bold;">abc</div>
<div style="position:absolute;left:47px;top:21px;width:29px;height:24px;overflow:hidden">
<div class="t" style="left:0.0px;top:3.0px;font-size:14px;letter-spacing:1.1041666666666667px;color:#000;">Text</div>
</div>
<svg width="8" height="5" style="position:absolute;left:81.5px;top:31px"><path d="M0 0H8L4 4.5z" fill="#555"/></svg>
<div style="position:absolute;left:98px;top:21px;width:129px;height:25px;box-sizing:border-box;background:linear-gradient(#fdfdfd,#ebebeb);border:1px solid #a9a9a9;border-radius:3px"></div>
<div class="t" style="left:104.3px;top:22.7px;font-size:9.5px;letter-spacing:-0.3875000000000002px;color:#5a5a5a;font-weight:bold;">abc</div>
<div style="position:absolute;left:123px;top:21px;width:84px;height:24px;overflow:hidden">
<div class="t" style="left:0.0px;top:3.0px;font-size:14px;letter-spacing:0.7895833333333329px;color:#000;">Text (string)</div>
</div>
<svg width="8" height="5" style="position:absolute;left:212.5px;top:31px"><path d="M0 0H8L4 4.5z" fill="#555"/></svg>
<div style="position:absolute;left:229px;top:21px;width:121px;height:25px;box-sizing:border-box;background:linear-gradient(#fdfdfd,#ebebeb);border:1px solid #a9a9a9;border-radius:3px"></div>
<svg width="14" height="14" style="position:absolute;left:236px;top:26px"><rect x="0.5" y="1.5" width="13" height="12" fill="#fff" stroke="#4a4a4a" stroke-width="1"/><rect x="0.5" y="1" width="13" height="2.5" fill="#4a4a4a"/><g fill="#666"><rect x="5" y="5.2" width="1.5" height="1.5"/><rect x="8" y="5.2" width="1.5" height="1.5"/><rect x="11" y="5.2" width="1.5" height="1.5"/><rect x="2" y="8.2" width="1.5" height="1.5"/><rect x="5" y="8.2" width="1.5" height="1.5"/><rect x="8" y="8.2" width="1.5" height="1.5"/><rect x="11" y="8.2" width="1.5" height="1.5"/><rect x="2" y="11" width="1.5" height="1.5"/><rect x="5" y="11" width="1.5" height="1.5"/><rect x="8" y="11" width="1.5" height="1.5"/></g></svg>
<div style="position:absolute;left:255px;top:21px;width:75px;height:24px;overflow:hidden">
<div class="t" style="left:0.0px;top:3.0px;font-size:14px;letter-spacing:0.8072916666666666px;color:#000;">Date</div>
</div>
<svg width="8" height="5" style="position:absolute;left:335.5px;top:31px"><path d="M0 0H8L4 4.5z" fill="#555"/></svg>
<div style="position:absolute;left:352px;top:21px;width:96px;height:25px;box-sizing:border-box;background:linear-gradient(#fdfdfd,#ebebeb);border:1px solid #a9a9a9;border-radius:3px"></div>
<div class="t" style="left:358.3px;top:22.7px;font-size:9.5px;letter-spacing:-0.3875000000000002px;color:#5a5a5a;font-weight:bold;">abc</div>
<div style="position:absolute;left:377px;top:21px;width:51px;height:24px;overflow:hidden">
<div class="t" style="left:0.0px;top:3.0px;font-size:14px;letter-spacing:0.7895833333333329px;color:#000;">Text (string)</div>
</div>
<svg width="8" height="5" style="position:absolute;left:433.5px;top:31px"><path d="M0 0H8L4 4.5z" fill="#555"/></svg>
<div style="position:absolute;left:450px;top:21px;width:123px;height:25px;box-sizing:border-box;background:linear-gradient(#fdfdfd,#ebebeb);border:1px solid #a9a9a9;border-radius:3px"></div>
<div class="t" style="left:456.3px;top:22.7px;font-size:9.5px;letter-spacing:2.8390625px;color:#5a5a5a;">t/f</div>
<div style="position:absolute;left:475px;top:21px;width:78px;height:24px;overflow:hidden">
<div class="t" style="left:0.0px;top:3.0px;font-size:14px;letter-spacing:0.7848958333333336px;color:#000;">Boolean</div>
</div>
<svg width="8" height="5" style="position:absolute;left:558.5px;top:31px"><path d="M0 0H8L4 4.5z" fill="#555"/></svg>
<div style="position:absolute;left:575px;top:21px;width:139px;height:25px;box-sizing:border-box;background:linear-gradient(#fdfdfd,#ebebeb);border:1px solid #a9a9a9;border-radius:3px"></div>
<div class="t" style="left:581.3px;top:22.7px;font-size:9.5px;letter-spacing:2.8390625px;color:#5a5a5a;">t/f</div>
<div style="position:absolute;left:600px;top:21px;width:94px;height:24px;overflow:hidden">
<div class="t" style="left:0.0px;top:3.0px;font-size:14px;letter-spacing:0.7848958333333336px;color:#000;">Boolean</div>
</div>
<svg width="8" height="5" style="position:absolute;left:699.5px;top:31px"><path d="M0 0H8L4 4.5z" fill="#555"/></svg>
<div style="position:absolute;left:716px;top:21px;width:124px;height:25px;box-sizing:border-box;background:linear-gradient(#fdfdfd,#ebebeb);border:1px solid #a9a9a9;border-radius:3px"></div>
<div class="t" style="left:722.3px;top:22.7px;font-size:9.5px;letter-spacing:0.47031250000000036px;color:#5a5a5a;font-weight:bold;">123</div>
<div style="position:absolute;left:741px;top:21px;width:79px;height:24px;overflow:hidden">
<div class="t" style="left:0.0px;top:3.0px;font-size:14px;letter-spacing:0.45px;color:#000;">Integer (32</div>
</div>
<svg width="8" height="5" style="position:absolute;left:825.5px;top:31px"><path d="M0 0H8L4 4.5z" fill="#555"/></svg>
<div style="position:absolute;left:842px;top:21px;width:148px;height:25px;box-sizing:border-box;background:linear-gradient(#fdfdfd,#ebebeb);border:1px solid #a9a9a9;border-radius:3px"></div>
<div class="t" style="left:848.3px;top:22.7px;font-size:9.5px;letter-spacing:-0.3875000000000002px;color:#5a5a5a;font-weight:bold;">abc</div>
<div style="position:absolute;left:867px;top:21px;width:103px;height:24px;overflow:hidden">
<div class="t" style="left:0.0px;top:3.0px;font-size:14px;letter-spacing:0.7895833333333329px;color:#000;">Text (string)</div>
</div>
<svg width="8" height="5" style="position:absolute;left:975.5px;top:31px"><path d="M0 0H8L4 4.5z" fill="#555"/></svg>
<div style="position:absolute;left:992px;top:21px;width:135px;height:25px;box-sizing:border-box;background:linear-gradient(#fdfdfd,#ebebeb);border:1px solid #a9a9a9;border-radius:3px"></div>
<div class="t" style="left:998.3px;top:22.7px;font-size:9.5px;letter-spacing:-0.3875000000000002px;color:#5a5a5a;font-weight:bold;">abc</div>
<div style="position:absolute;left:1017px;top:21px;width:90px;height:24px;overflow:hidden">
<div class="t" style="left:0.0px;top:3.0px;font-size:14px;letter-spacing:0.7895833333333329px;color:#000;">Text (string)</div>
</div>
<svg width="8" height="5" style="position:absolute;left:1112.5px;top:31px"><path d="M0 0H8L4 4.5z" fill="#555"/></svg>
<div style="position:absolute;left:1129px;top:21px;width:127px;height:25px;box-sizing:border-box;background:linear-gradient(#fdfdfd,#ebebeb);border:1px solid #a9a9a9;border-radius:3px"></div>
<div class="t" style="left:1135.3px;top:22.7px;font-size:9.5px;letter-spacing:-0.3875000000000002px;color:#5a5a5a;font-weight:bold;">abc</div>
<div style="position:absolute;left:1154px;top:21px;width:82px;height:24px;overflow:hidden">
<div class="t" style="left:0.0px;top:3.0px;font-size:14px;letter-spacing:0.7895833333333329px;color:#000;">Text (string)</div>
</div>
<svg width="8" height="5" style="position:absolute;left:1241.5px;top:31px"><path d="M0 0H8L4 4.5z" fill="#555"/></svg>
<div style="position:absolute;left:1258px;top:21px;width:120px;height:25px;box-sizing:border-box;background:linear-gradient(#fdfdfd,#ebebeb);border:1px solid #a9a9a9;border-radius:3px"></div>
<div class="t" style="left:1264.3px;top:22.7px;font-size:9.5px;letter-spacing:-0.3875000000000002px;color:#5a5a5a;font-weight:bold;">abc</div>
<div style="position:absolute;left:1283px;top:21px;width:75px;height:24px;overflow:hidden">
<div class="t" style="left:0.0px;top:3.0px;font-size:14px;letter-spacing:0.7895833333333329px;color:#000;">Text (string)</div>
</div>
<svg width="8" height="5" style="position:absolute;left:1363.5px;top:31px"><path d="M0 0H8L4 4.5z" fill="#555"/></svg>
<div style="position:absolute;left:1380px;top:21px;width:123px;height:25px;box-sizing:border-box;background:linear-gradient(#fdfdfd,#ebebeb);border:1px solid #a9a9a9;border-radius:3px"></div>
<div class="t" style="left:1386.3px;top:22.7px;font-size:9.5px;letter-spacing:-0.3875000000000002px;color:#5a5a5a;font-weight:bold;">abc</div>
<div style="position:absolute;left:1405px;top:21px;width:78px;height:24px;overflow:hidden">
<div class="t" style="left:0.0px;top:3.0px;font-size:14px;letter-spacing:0.7895833333333329px;color:#000;">Text (string)</div>
</div>
<svg width="8" height="5" style="position:absolute;left:1488.5px;top:31px"><path d="M0 0H8L4 4.5z" fill="#555"/></svg>
<div class="t" style="left:3.0px;top:48.1px;font-size:14px;letter-spacing:0.45px;color:#000;">1</div>
<div style="position:absolute;left:25px;top:47.9px;width:71px;height:20px;overflow:hidden">
<div class="t" style="left:0.0px;top:0.2px;font-size:14px;letter-spacing:1.1166666666666671px;color:#000;">18AA</div>
</div>
<div style="position:absolute;left:101px;top:47.9px;width:126px;height:20px;overflow:hidden">
<div class="t" style="left:0.0px;top:0.2px;font-size:14px;letter-spacing:0.3598557692307688px;color:#000;">18 MEADOWS ...</div>
</div>
<div style="position:absolute;left:232px;top:47.9px;width:118px;height:20px;overflow:hidden">
<div class="t" style="left:0.0px;top:0.2px;font-size:14px;letter-spacing:0.4638888888888886px;color:#000;">2012-09-01</div>
</div>
<div style="position:absolute;left:355px;top:47.9px;width:93px;height:20px;overflow:hidden">
<div class="t" style="left:0.0px;top:0.2px;font-size:14px;letter-spacing:0.35px;color:#000;">O</div>
</div>
<div style="position:absolute;left:453px;top:47.9px;width:120px;height:20px;overflow:hidden">
<div class="t" style="left:0.0px;top:0.2px;font-size:14px;letter-spacing:0.35px;color:#000;"></div>
</div>
<div style="position:absolute;left:578px;top:47.9px;width:136px;height:20px;overflow:hidden">
<div class="t" style="left:0.0px;top:0.2px;font-size:14px;letter-spacing:0.35px;color:#000;"></div>
</div>
<div style="position:absolute;left:719px;top:47.9px;width:121px;height:20px;overflow:hidden">
<div class="t" style="left:0.0px;top:0.2px;font-size:14px;letter-spacing:0.35px;color:#000;">0</div>
</div>
<div style="position:absolute;left:845px;top:47.9px;width:145px;height:20px;overflow:hidden">
<div class="t" style="left:0.0px;top:0.2px;font-size:14px;letter-spacing:0.6082589285714286px;color:#000;">059-21-54.1700N</div>
</div>
<div style="position:absolute;left:995px;top:47.9px;width:132px;height:20px;overflow:hidden">
<div class="t" style="left:0.0px;top:0.2px;font-size:14px;letter-spacing:0.3872767857142857px;color:#000;">135-48-17.6600W</div>
</div>
<div style="position:absolute;left:1132px;top:47.9px;width:124px;height:20px;overflow:hidden">
<div class="t" style="left:0.0px;top:0.2px;font-size:14px;letter-spacing:0.35px;color:#000;">E</div>
</div>
<div style="position:absolute;left:1261px;top:47.9px;width:117px;height:20px;overflow:hidden">
<div class="t" style="left:0.0px;top:0.2px;font-size:14px;letter-spacing:0.35px;color:#000;">89</div>
</div>
<div style="position:absolute;left:1383px;top:47.9px;width:120px;height:20px;overflow:hidden">
<div class="t" style="left:0.0px;top:0.2px;font-size:14px;letter-spacing:0.35px;color:#000;">E</div>
</div>
<div class="t" style="left:3.0px;top:69.1px;font-size:14px;letter-spacing:0.45px;color:#000;">2</div>
<div style="position:absolute;left:25px;top:68.9px;width:71px;height:20px;overflow:hidden">
<div class="t" style="left:0.0px;top:0.2px;font-size:14px;letter-spacing:0.35px;color:#000;">AK46</div>
</div>
<div style="position:absolute;left:101px;top:68.9px;width:126px;height:20px;overflow:hidden">
<div class="t" style="left:0.0px;top:0.2px;font-size:14px;letter-spacing:0.35px;color:#000;">ABI</div>
</div>
<div style="position:absolute;left:232px;top:68.9px;width:118px;height:20px;overflow:hidden">
<div class="t" style="left:0.0px;top:0.2px;font-size:14px;letter-spacing:0.4638888888888886px;color:#000;">2000-02-01</div>
</div>
<div style="position:absolute;left:355px;top:68.9px;width:93px;height:20px;overflow:hidden">
<div class="t" style="left:0.0px;top:0.2px;font-size:14px;letter-spacing:0.35px;color:#000;">O</div>
</div>
<div style="position:absolute;left:453px;top:68.9px;width:120px;height:20px;overflow:hidden">
<div class="t" style="left:0.0px;top:0.2px;font-size:14px;letter-spacing:0.35px;color:#000;"></div>
</div>
<div style="position:absolute;left:578px;top:68.9px;width:136px;height:20px;overflow:hidden">
<div class="t" style="left:0.0px;top:0.2px;font-size:14px;letter-spacing:0.35px;color:#000;"></div>
</div>
<div style="position:absolute;left:719px;top:68.9px;width:121px;height:20px;overflow:hidden">
<div class="t" style="left:0.0px;top:0.2px;font-size:14px;letter-spacing:0.35px;color:#000;">0</div>
</div>
<div style="position:absolute;left:845px;top:68.9px;width:145px;height:20px;overflow:hidden">
<div class="t" style="left:0.0px;top:0.2px;font-size:14px;letter-spacing:0.6082589285714286px;color:#000;">061-37-43.7900N</div>
</div>
<div style="position:absolute;left:995px;top:68.9px;width:132px;height:20px;overflow:hidden">
<div class="t" style="left:0.0px;top:0.2px;font-size:14px;letter-spacing:0.3872767857142857px;color:#000;">149-02-35.4800W</div>
</div>
<div style="position:absolute;left:1132px;top:68.9px;width:124px;height:20px;overflow:hidden">
<div class="t" style="left:0.0px;top:0.2px;font-size:14px;letter-spacing:0.35px;color:#000;">E</div>
</div>
<div style="position:absolute;left:1261px;top:68.9px;width:117px;height:20px;overflow:hidden">
<div class="t" style="left:0.0px;top:0.2px;font-size:14px;letter-spacing:0.35px;color:#000;">750</div>
</div>
<div style="position:absolute;left:1383px;top:68.9px;width:120px;height:20px;overflow:hidden">
<div class="t" style="left:0.0px;top:0.2px;font-size:14px;letter-spacing:0.35px;color:#000;">E</div>
</div>
<div class="t" style="left:3.0px;top:90.1px;font-size:14px;letter-spacing:0.45px;color:#000;">3</div>
<div style="position:absolute;left:25px;top:89.9px;width:71px;height:20px;overflow:hidden">
<div class="t" style="left:0.0px;top:0.2px;font-size:14px;letter-spacing:0.35px;color:#000;">ADK</div>
</div>
<div style="position:absolute;left:101px;top:89.9px;width:126px;height:20px;overflow:hidden">
<div class="t" style="left:0.0px;top:0.2px;font-size:14px;letter-spacing:0.35px;color:#000;">ADAK</div>
</div>
<div style="position:absolute;left:232px;top:89.9px;width:118px;height:20px;overflow:hidden">
<div class="t" style="left:0.0px;top:0.2px;font-size:14px;letter-spacing:0.4638888888888886px;color:#000;">1949-04-01</div>
</div>
<div style="position:absolute;left:355px;top:89.9px;width:93px;height:20px;overflow:hidden">
<div class="t" style="left:0.0px;top:0.2px;font-size:14px;letter-spacing:0.35px;color:#000;">O</div>
</div>
<div style="position:absolute;left:453px;top:89.9px;width:120px;height:20px;overflow:hidden">
<div class="t" style="left:0.0px;top:0.2px;font-size:14px;letter-spacing:0.35px;color:#000;">N</div>
</div>
<div style="position:absolute;left:578px;top:89.9px;width:136px;height:20px;overflow:hidden">
<div class="t" style="left:0.0px;top:0.2px;font-size:14px;letter-spacing:0.35px;color:#000;">N</div>
</div>
<div style="position:absolute;left:719px;top:89.9px;width:121px;height:20px;overflow:hidden">
<div class="t" style="left:0.0px;top:0.2px;font-size:14px;letter-spacing:0.35px;color:#000;">232</div>
</div>
<div style="position:absolute;left:845px;top:89.9px;width:145px;height:20px;overflow:hidden">
<div class="t" style="left:0.0px;top:0.2px;font-size:14px;letter-spacing:0.6082589285714286px;color:#000;">051-53-00.9000N</div>
</div>
<div style="position:absolute;left:995px;top:89.9px;width:132px;height:20px;overflow:hidden">
<div class="t" style="left:0.0px;top:0.2px;font-size:14px;letter-spacing:0.3872767857142857px;color:#000;">176-38-32.9400W</div>
</div>
<div style="position:absolute;left:1132px;top:89.9px;width:124px;height:20px;overflow:hidden">
<div class="t" style="left:0.0px;top:0.2px;font-size:14px;letter-spacing:0.35px;color:#000;">E</div>
</div>
<div style="position:absolute;left:1261px;top:89.9px;width:117px;height:20px;overflow:hidden">
<div class="t" style="left:0.0px;top:0.2px;font-size:14px;letter-spacing:0.35px;color:#000;">19,5</div>
</div>
<div style="position:absolute;left:1383px;top:89.9px;width:120px;height:20px;overflow:hidden">
<div class="t" style="left:0.0px;top:0.2px;font-size:14px;letter-spacing:0.35px;color:#000;">S</div>
</div>
<div class="t" style="left:3.0px;top:111.1px;font-size:14px;letter-spacing:0.45px;color:#000;">4</div>
<div style="position:absolute;left:25px;top:110.9px;width:71px;height:20px;overflow:hidden">
<div class="t" style="left:0.0px;top:0.2px;font-size:14px;letter-spacing:0.35px;color:#000;">9AA9</div>
</div>
<div style="position:absolute;left:101px;top:110.9px;width:126px;height:20px;overflow:hidden">
<div class="t" style="left:0.0px;top:0.2px;font-size:14px;letter-spacing:0.1516826923076921px;color:#000;">AIRKAT AIRPARK</div>
</div>
<div style="position:absolute;left:232px;top:110.9px;width:118px;height:20px;overflow:hidden">
<div class="t" style="left:0.0px;top:0.2px;font-size:14px;letter-spacing:0.4638888888888886px;color:#000;">2017-06-01</div>
</div>
<div style="position:absolute;left:355px;top:110.9px;width:93px;height:20px;overflow:hidden">
<div class="t" style="left:0.0px;top:0.2px;font-size:14px;letter-spacing:0.35px;color:#000;">O</div>
</div>
<div style="position:absolute;left:453px;top:110.9px;width:120px;height:20px;overflow:hidden">
<div class="t" style="left:0.0px;top:0.2px;font-size:14px;letter-spacing:0.35px;color:#000;"></div>
</div>
<div style="position:absolute;left:578px;top:110.9px;width:136px;height:20px;overflow:hidden">
<div class="t" style="left:0.0px;top:0.2px;font-size:14px;letter-spacing:0.35px;color:#000;"></div>
</div>
<div style="position:absolute;left:719px;top:110.9px;width:121px;height:20px;overflow:hidden">
<div class="t" style="left:0.0px;top:0.2px;font-size:14px;letter-spacing:0.35px;color:#000;">0</div>
</div>
<div style="position:absolute;left:845px;top:110.9px;width:145px;height:20px;overflow:hidden">
<div class="t" style="left:0.0px;top:0.2px;font-size:14px;letter-spacing:0.6830357142857143px;color:#000;">059-24-11.0000N</div>
</div>
<div style="position:absolute;left:995px;top:110.9px;width:132px;height:20px;overflow:hidden">
<div class="t" style="left:0.0px;top:0.2px;font-size:14px;letter-spacing:0.3872767857142857px;color:#000;">136-01-10.0000W</div>
</div>
<div style="position:absolute;left:1132px;top:110.9px;width:124px;height:20px;overflow:hidden">
<div class="t" style="left:0.0px;top:0.2px;font-size:14px;letter-spacing:0.35px;color:#000;">E</div>
</div>
<div style="position:absolute;left:1261px;top:110.9px;width:117px;height:20px;overflow:hidden">
<div class="t" style="left:0.0px;top:0.2px;font-size:14px;letter-spacing:0.35px;color:#000;">260</div>
</div>
<div style="position:absolute;left:1383px;top:110.9px;width:120px;height:20px;overflow:hidden">
<div class="t" style="left:0.0px;top:0.2px;font-size:14px;letter-spacing:0.35px;color:#000;">E</div>
</div>
</div>
<div style="position:absolute;left:156px;top:882px;width:1388px;height:13px;box-sizing:border-box;background:#e2e2e2;border-top:1px solid #c4c4c4"></div>
<div style="position:absolute;left:156px;top:882px;width:14px;height:13px;box-sizing:border-box;background:#efefef;border-top:1px solid #c4c4c4;border-right:1px solid #cfcfcf"></div>
<div style="position:absolute;left:170px;top:883px;width:1134px;height:12px;box-sizing:border-box;background:linear-gradient(#fbfbfb,#f0f0f0);border-right:1px solid #c9c9c9"></div>
<div style="position:absolute;left:1530px;top:882px;width:14px;height:13px;box-sizing:border-box;background:#efefef;border-top:1px solid #c4c4c4;border-left:1px solid #cfcfcf"></div>
<svg width="5" height="8" style="position:absolute;left:160px;top:885px"><path d="M5 0V8L0 4z" fill="#555"/></svg>
<svg width="5" height="8" style="position:absolute;left:1535px;top:885px"><path d="M0 0V8L5 4z" fill="#555"/></svg>
<div style="position:absolute;left:1544px;top:754px;width:14px;height:128px;box-sizing:border-box;background:#e2e2e2;border-left:1px solid #c4c4c4"></div>
<div style="position:absolute;left:1544px;top:754px;width:14px;height:14px;box-sizing:border-box;background:#efefef;border-left:1px solid #c4c4c4;border-bottom:1px solid #cfcfcf"></div>
<div style="position:absolute;left:1545px;top:768px;width:13px;height:26px;box-sizing:border-box;background:linear-gradient(90deg,#fbfbfb,#f0f0f0);border-bottom:1px solid #c9c9c9"></div>
<div style="position:absolute;left:1544px;top:868px;width:14px;height:14px;box-sizing:border-box;background:#efefef;border-left:1px solid #c4c4c4;border-top:1px solid #cfcfcf"></div>
<svg width="8" height="5" style="position:absolute;left:1547px;top:758px"><path d="M0 5H8L4 0z" fill="#555"/></svg>
<svg width="8" height="5" style="position:absolute;left:1547px;top:873px"><path d="M0 0H8L4 5z" fill="#555"/></svg>
<div style="position:absolute;left:1544px;top:882px;width:14px;height:13px;box-sizing:border-box;background:#efefef;border-top:1px solid #c4c4c4;border-left:1px solid #c4c4c4"></div>
<div style="position:absolute;left:129px;top:952px;width:80px;height:25px;box-sizing:border-box;background:linear-gradient(#fdfdfd,#ececec);border:1px solid #a9a9a9;border-radius:3px"></div>
<svg width="18" height="18" style="position:absolute;left:142px;top:955.2px"><circle cx="9" cy="9" r="7.8" fill="#3ea0e4" stroke="#2a6a99" stroke-width="0.8"/><text x="9" y="13.2" font-size="11" fill="#fff" text-anchor="middle" font-family="Liberation Sans">?</text></svg>
<div class="t" style="left:161.6px;top:954.8px;font-size:14px;letter-spacing:1.0343749999999996px;color:#000;">Help</div>
<div style="position:absolute;left:1419px;top:952px;width:80px;height:25px;box-sizing:border-box;background:linear-gradient(#fdfdfd,#ececec);border:1px solid #a9a9a9;border-radius:3px"></div>
<svg width="18" height="18" style="position:absolute;left:1434px;top:955.2px"><circle cx="9" cy="9" r="8" fill="#188222"/><path d="M5 9.2L7.8 12L13 6.5" stroke="#fff" stroke-width="1.8" fill="none"/></svg>
<div class="t" style="left:1453.6px;top:954.8px;font-size:14px;letter-spacing:1.2890625px;color:#000;"><u>A</u>dd</div>
<div style="position:absolute;left:1505px;top:952px;width:80px;height:25px;box-sizing:border-box;background:linear-gradient(#fdfdfd,#ececec);border:1px solid #a9a9a9;border-radius:3px"></div>
<svg width="18" height="18" style="position:absolute;left:1515px;top:955.2px"><circle cx="9" cy="9" r="8" fill="#c8192e"/><path d="M6 6L12 12M12 6L6 12" stroke="#fff" stroke-width="1.8"/></svg>
<div class="t" style="left:1534.3px;top:954.8px;font-size:14px;letter-spacing:0.3468750000000007px;color:#000;"><u>C</u>lose</div>
</body></html>
